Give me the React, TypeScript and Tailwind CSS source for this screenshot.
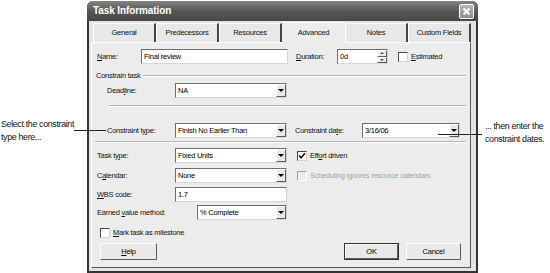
import type { ReactNode } from "react";

const sunken =
  "bg-white border border-t-[#6e6e6e] border-l-[#6e6e6e] border-r-[#d6d6d6] border-b-[#d6d6d6]";
const raised =
  "bg-[#e9e9e9] border border-t-white border-l-white border-r-[#5c5c5c] border-b-[#5c5c5c]";

function U({ children }: { children: ReactNode }) {
  return <span className="underline underline-offset-1">{children}</span>;
}

function TextBox({ w, value }: { w: string; value: string }) {
  return (
    <div className={`${w} h-[15px] ${sunken} flex items-center pl-[2px] text-black`}>
      {value}
    </div>
  );
}

function Combo({ w, value }: { w: string; value: string }) {
  return (
    <div className={`${w} h-[15px] ${sunken} flex items-center`}>
      <span className="flex-1 pl-[2px] text-black whitespace-nowrap overflow-hidden">{value}</span>
      <div className={`w-[10px] h-[13px] ${raised} flex items-center justify-center`}>
        <div className="w-0 h-0 border-l-[3px] border-r-[3px] border-t-[3px] border-l-transparent border-r-transparent border-t-black" />
      </div>
    </div>
  );
}

function Check({ checked, disabled }: { checked?: boolean; disabled?: boolean }) {
  return (
    <div
      className={`w-[10px] h-[10px] border ${
        disabled
          ? "bg-[#ececec] border-t-[#a0a0a0] border-l-[#a0a0a0] border-r-white border-b-white"
          : "bg-white border-t-[#444] border-l-[#444] border-r-[#d6d6d6] border-b-[#d6d6d6]"
      } flex items-center justify-center`}
    >
      {checked && (
        <svg width="8" height="8" viewBox="0 0 8 8">
          <path d="M1 3.5 L3 5.8 L7 1.2" stroke="#111" strokeWidth="1.6" fill="none" />
        </svg>
      )}
    </div>
  );
}

function Button({ label, w, def }: { label: ReactNode; w: string; def?: boolean }) {
  return (
    <div
      className={`${w} h-[17px] flex items-center justify-center ${
        def ? "border border-[#333]" : ""
      }`}
    >
      <div className={`w-full h-full ${raised} flex items-center justify-center text-black`}>
        {label}
      </div>
    </div>
  );
}

function Etched({ className }: { className: string }) {
  return <div className={`${className} h-[2px] border-t border-t-[#b4b4b4] border-b border-b-white`} />;
}

const tabs = ["General", "Predecessors", "Resources", "Advanced", "Notes", "Custom Fields"];

export default function App() {
  return (
    <div className="relative w-[550px] h-[273px] bg-white flex overflow-hidden font-[family-name:'Liberation_Sans',sans-serif] text-[7.5px] tracking-[-0.25px] leading-none text-[#111]">
      {/* left note */}
      <div className="w-[87px] shrink-0 pt-[118px] pl-[1px] text-[8.9px] tracking-[-0.35px] leading-[13px] text-[#111] whitespace-nowrap">
        Select the constraint
        <br />
        type here...
      </div>

      {/* dialog */}
      <div className="w-[391px] shrink-0 h-[272px] mt-[1px] flex flex-col rounded-t-[6px] bg-[#e4e4e4] border-2 border-t-0 border-[#333]">
        <div className="h-[20px] -mx-[2px] rounded-t-[6px] bg-gradient-to-b from-[#848484] via-[#575757] to-[#474747] flex items-center justify-between pl-[6px] pr-[4px]">
          <span className="text-white font-bold text-[10px] tracking-[-0.1px]">
            Task Information
          </span>
          <div className="w-[15px] h-[15px] rounded-[2px] border border-white bg-gradient-to-b from-[#b8b8b8] to-[#8c8c8c] flex items-center justify-center">
            <svg width="9" height="9" viewBox="0 0 9 9">
              <path d="M1.5 1.5 L7.5 7.5 M7.5 1.5 L1.5 7.5" stroke="white" strokeWidth="1.8" />
            </svg>
          </div>
        </div>

        {/* tabs */}
        <div className="h-[21px] flex items-end pl-[4px]">
          {tabs.map((t) => {
            const active = t === "Advanced";
            return (
              <div
                key={t}
                className={`w-[63px] flex items-center justify-center text-[#111] ${
                  active
                    ? "h-[21px] bg-[#ececec] border-t border-t-white -mb-[1px] relative z-10"
                    : "h-[19px] bg-[#e8e8e8] border-t border-t-white border-l border-l-white border-r-2 border-r-[#444]"
                }`}
              >
                {t}
              </div>
            );
          })}
        </div>

        {/* panel */}
        <div className="w-[380px] flex-1 ml-[2px] mb-[3px] bg-[#ececec] border border-t-white border-l-white border-r-[#555] border-b-[#555] flex flex-col">
          <div className="h-[15px] mt-[6px] flex items-center pl-[5px]">
            <span className="w-[44px]">
              <U>N</U>ame:
            </span>
            <TextBox w="w-[147px]" value="Final review" />
            <span className="w-[41px] ml-[8px]">
              <U>D</U>uration:
            </span>
            <div className={`w-[51px] h-[15px] ${sunken} flex items-center`}>
              <span className="flex-1 pl-[2px] text-black">0d</span>
              <div className="w-[10px] h-[13px] flex flex-col">
                <div className={`flex-1 ${raised} flex items-center justify-center`}>
                  <div className="w-0 h-0 border-l-[2px] border-r-[2px] border-b-[2px] border-l-transparent border-r-transparent border-b-[#555]" />
                </div>
                <div className={`flex-1 ${raised} flex items-center justify-center`}>
                  <div className="w-0 h-0 border-l-[2px] border-r-[2px] border-t-[2px] border-l-transparent border-r-transparent border-t-[#555]" />
                </div>
              </div>
            </div>
            <div className="ml-[10px] flex items-center gap-[3px]">
              <Check />
              <span>
                <U>E</U>stimated
              </span>
            </div>
          </div>

          <div className="h-[10px] mt-[7px] flex items-center pl-[4px]">
            <span>Constrain task</span>
            <Etched className="flex-1 ml-[3px] mr-[4px]" />
          </div>

          <div className="h-[15px] mt-[2px] flex items-center pl-[15px]">
            <span className="w-[68px]">
              Dead<U>l</U>ine:
            </span>
            <Combo w="w-[112px]" value="NA" />
          </div>

          <Etched className="mt-[7px] ml-[17px] mr-[4px]" />

          <div className="h-[15px] mt-[16px] flex items-center pl-[15px]">
            <span className="w-[68px]">
              Constraint t<U>y</U>pe:
            </span>
            <Combo w="w-[112px]" value="Finish No Earlier Than" />
            <span className="w-[67px] ml-[8px]">
              Constraint da<U>t</U>e:
            </span>
            <Combo w="w-[98px]" value="3/16/06" />
          </div>

          <Etched className="mt-[3px] ml-[3px] mr-[4px]" />

          <div className="h-[15px] mt-[5px] flex items-center pl-[5px]">
            <span className="w-[78px]">
              Task t<U>y</U>pe:
            </span>
            <Combo w="w-[112px]" value="Fixed Units" />
            <div className="ml-[10px] flex items-center gap-[3px]">
              <Check checked />
              <span>
                Eff<U>o</U>rt driven
              </span>
            </div>
          </div>

          <div className="h-[15px] mt-[5px] flex items-center pl-[5px]">
            <span className="w-[78px]">
              C<U>a</U>lendar:
            </span>
            <Combo w="w-[112px]" value="None" />
            <div className="ml-[10px] flex items-center gap-[3px] text-[#a6a6a6]">
              <Check disabled />
              <span>
                Scheduling i<U>g</U>nores resource calendars
              </span>
            </div>
          </div>

          <div className="h-[15px] mt-[4px] flex items-center pl-[5px]">
            <span className="w-[78px]">
              <U>W</U>BS code:
            </span>
            <TextBox w="w-[112px]" value="1.7" />
          </div>

          <div className="h-[15px] mt-[3px] flex items-center pl-[5px]">
            <span className="w-[100px]">
              Earned <U>v</U>alue method:
            </span>
            <Combo w="w-[90px]" value="% Complete" />
          </div>

          <div className="h-[10px] mt-[8px] flex items-center gap-[3px] pl-[8px]">
            <Check />
            <span>
              <U>M</U>ark task as milestone
            </span>
          </div>

          <div className="h-[17px] mt-[5px] flex items-center pl-[8px]">
            <Button w="w-[57px]" label={<><U>H</U>elp</>} />
            <div className="flex-1" />
            <Button w="w-[55px]" label="OK" def />
            <div className="w-[7px]" />
            <Button w="w-[55px]" label="Cancel" />
            <div className="w-[9px]" />
          </div>
        </div>
      </div>

      {/* right note */}
      <div className="pl-[7px] pt-[120px] text-[8.9px] tracking-[-0.35px] leading-[13px] text-[#111] whitespace-nowrap">
        ... then enter the
        <br />
        constraint dates.
      </div>

      {/* leader lines */}
      <div className="absolute left-[74px] top-[130px] w-[32px] h-px bg-[#222]" />
      <div className="absolute left-[438px] top-[134px] w-[44px] h-px bg-[#222]" />
    </div>
  );
}
